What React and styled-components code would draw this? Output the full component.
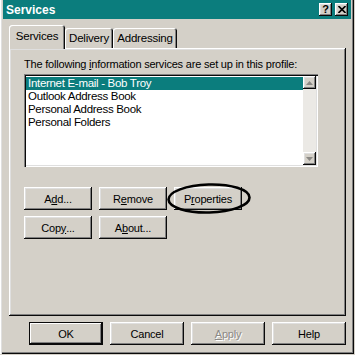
import React from 'react';
import styled, { createGlobalStyle, css } from 'styled-components';

const GlobalStyle = createGlobalStyle`
    html, body { margin: 0; padding: 0; background: #d4d0c8; }
    body {
        font-family: "Liberation Sans", Arial, sans-serif;
        font-size: 11px;
        letter-spacing: -0.2px;
        color: #000;
    }
`;

const raised = css`
    box-shadow: inset -1px -1px #0a0a0a, inset 1px 1px #ffffff,
        inset -2px -2px #808080, inset 2px 2px #dfdfdf;
`;

const Window = styled('div')`
    width: 354px;
    height: 354px;
    box-sizing: border-box;
    padding: 0 3px 3px 3px;
    background: #d4d0c8;
    display: flex;
    flex-direction: column;
    box-shadow: inset 1px 0 #ffffff, inset 2px 0 #dfdfdf,
        inset -1px -1px #0a0a0a, inset -2px -2px #808080;
`;
const TitleBar = styled('div')`
    height: 19px;
    background: #0b7d7d;
    display: flex;
    align-items: center;
    justify-content: space-between;
    padding: 0 3px 0 3px;
`;
const Title = styled('div')`
    color: #fff;
    font-weight: 700;
    font-size: 12px;
    letter-spacing: 0;
`;
const Controls = styled('div')`
    display: flex;
    gap: 3px;
`;
const CtrlButton = styled('div')`
    width: 13px;
    height: 13px;
    background: #d4d0c8;
    ${raised};
    display: flex;
    align-items: center;
    justify-content: center;
    font-weight: 700;
    font-size: 11px;
    line-height: 1;
`;
const Body = styled('div')`
    flex: 1;
    display: flex;
    flex-direction: column;
    padding: 6px 2px 0 6px;
`;
const TabStrip = styled('div')`
    display: flex;
    align-items: flex-end;
    height: 23px;
`;
const Tab = styled('div')`
    position: relative;
    box-sizing: border-box;
    width: ${p => p.w}px;
    height: ${p => p.active ? 24 : 20}px;
    margin-bottom: ${p => p.active ? -1 : 0}px;
    display: flex;
    align-items: center;
    justify-content: center;
    background: #d4d0c8;
    border-radius: 3px 3px 0 0;
    box-shadow: inset 1px 1px #ffffff, inset -1px 0 #0a0a0a, inset -2px 0 #808080;
    z-index: ${p => p.active ? 2 : 1};
    font-size: 11.5px;
    padding-bottom: ${p => p.active ? 3 : 0}px;
`;
const Panel = styled('div')`
    box-sizing: border-box;
    width: 337px;
    height: 268px;
    padding: 10px 0 0 15px;
    ${raised};
    display: flex;
    flex-direction: column;
`;
const Label = styled('div')`
    line-height: 13px;
    height: 13px;
`;
const ListBox = styled('div')`
    box-sizing: border-box;
    margin-top: 3px;
    width: 294px;
    height: 93px;
    background: #fff;
    padding: 2px;
    display: flex;
    box-shadow: inset 1px 1px #808080, inset 2px 2px #0a0a0a,
        inset -1px -1px #ffffff, inset -2px -2px #dfdfdf;
`;
const Items = styled('div')`
    flex: 1;
    padding-top: 1px;
`;
const Item = styled('div')`
    height: 13px;
    line-height: 13px;
    padding-left: 2px;
    font-size: 11.5px;
    letter-spacing: -0.3px;
    white-space: nowrap;
    ${p => p.selected && `background: #0b7d7d; color: #fff;`}
`;
const ScrollBar = styled('div')`
    width: 13px;
    display: flex;
    flex-direction: column;
    justify-content: space-between;
    background: #ebe9e5;
`;
const ScrollBtn = styled('div')`
    width: 13px;
    height: 13px;
    background: #d4d0c8;
    ${raised};
    display: flex;
    align-items: center;
    justify-content: center;
`;
const ButtonGrid = styled('div')`
    margin-top: 20px;
    display: grid;
    grid-template-columns: repeat(3, 68px);
    grid-auto-rows: 23px;
    column-gap: 7px;
    row-gap: 6px;
`;
const Button = styled('div')`
    position: relative;
    box-sizing: border-box;
    width: ${p => p.w || 68}px;
    height: 23px;
    background: #d4d0c8;
    display: flex;
    align-items: center;
    justify-content: center;
    ${p => p.isDefault
        ? `box-shadow: inset 0 0 0 1px #0a0a0a, inset -2px -2px #0a0a0a, inset 2px 2px #ffffff, inset -3px -3px #808080;`
        : `box-shadow: inset -1px -1px #0a0a0a, inset 1px 1px #ffffff, inset -2px -2px #808080, inset 2px 2px #dfdfdf;`}
    ${p => p.disabled && `color: #8c8a86; text-shadow: 1px 1px #ffffff;`}
`;
const Key = styled('span')`
    text-decoration: underline;
`;
const Circle = styled('svg')`
    position: absolute;
    left: -7px;
    top: -4px;
    width: 84px;
    height: 31px;
    pointer-events: none;
    overflow: visible;
`;
const Footer = styled('div')`
    margin-top: 6px;
    width: 337px;
    display: flex;
    justify-content: flex-end;
    gap: 7px;
`;

const Arrow = ({ up }) => (
    <svg width="7" height="4" viewBox="0 0 7 4">
        <path d={up ? 'M3.5 0 L7 4 L0 4 Z' : 'M0 0 L7 0 L3.5 4 Z'} fill="#8a8884" />
    </svg>
);

const items = ['Internet E-mail - Bob Troy', 'Outlook Address Book', 'Personal Address Book', 'Personal Folders'];

export default function App(){
    return(
        <>
            <GlobalStyle/>
            <Window>
                <TitleBar>
                    <Title>Services</Title>
                    <Controls>
                        <CtrlButton>?</CtrlButton>
                        <CtrlButton>
                            <svg width="8" height="7" viewBox="0 0 8 7">
                                <path d="M0.5 0 L7.5 7 M7.5 0 L0.5 7" stroke="#000" strokeWidth="1.6" />
                            </svg>
                        </CtrlButton>
                    </Controls>
                </TitleBar>
                <Body>
                    <TabStrip>
                        <Tab active w={56}>Services</Tab>
                        <Tab w={48}>Delivery</Tab>
                        <Tab w={64}>Addressing</Tab>
                    </TabStrip>
                    <Panel>
                        <Label>The following <Key>i</Key>nformation services are set up in this profile:</Label>
                        <ListBox>
                            <Items>
                                {items.map((it, i) => <Item key={it} selected={i === 0}>{it}</Item>)}
                            </Items>
                            <ScrollBar>
                                <ScrollBtn><Arrow up /></ScrollBtn>
                                <ScrollBtn><Arrow /></ScrollBtn>
                            </ScrollBar>
                        </ListBox>
                        <ButtonGrid>
                            <Button>A<Key>d</Key>d...</Button>
                            <Button>R<Key>e</Key>move</Button>
                            <Button>
                                P<Key>r</Key>operties
                                <Circle viewBox="0 0 84 31">
                                    <ellipse cx="42" cy="15.5" rx="40.5" ry="14" fill="none" stroke="#000" strokeWidth="2.6" transform="rotate(-1.5 42 15.5)" />
                                </Circle>
                            </Button>
                            <Button>Cop<Key>y</Key>...</Button>
                            <Button>A<Key>b</Key>out...</Button>
                        </ButtonGrid>
                    </Panel>
                    <Footer>
                        <Button w={74} isDefault>OK</Button>
                        <Button w={74}>Cancel</Button>
                        <Button w={74} disabled><Key>A</Key>pply</Button>
                        <Button w={74}>Help</Button>
                    </Footer>
                </Body>
            </Window>
        </>
    );
}
